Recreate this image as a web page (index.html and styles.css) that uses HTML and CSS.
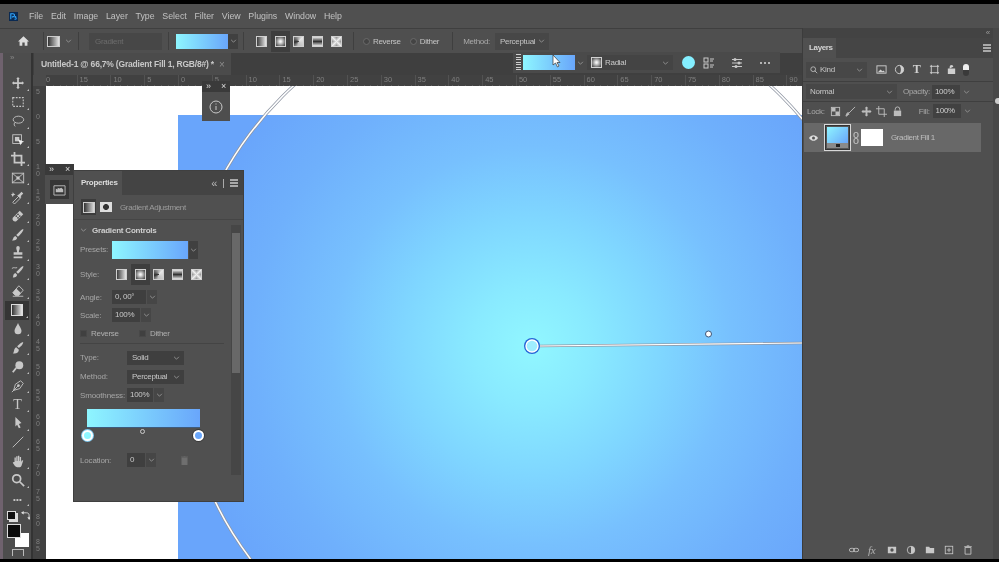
FILE: index.html
```html
<!DOCTYPE html>
<html lang="en">
<head>
<meta charset="utf-8">
<title>Photoshop</title>
<link rel="stylesheet" href="styles.css">
</head>
<body>
<div class="frame">
  <header class="menubar">
    <svg class="pslogo" viewBox="0 0 10 10"><rect width="10" height="10" fill="#0b2a52"/><path d="M2 8V2h2.4a1.6 1.6 0 0 1 0 3.4H3.2" fill="none" stroke="#31a8ff" stroke-width="1.2"/><path d="M8 5H6.6v1.2H8V8H6" fill="none" stroke="#31a8ff"/></svg>
    <nav class="menu"><span>File</span><span>Edit</span><span>Image</span><span>Layer</span><span>Type</span><span>Select</span><span>Filter</span><span>View</span><span>Plugins</span><span>Window</span><span>Help</span></nav>
  </header>
  <div class="main">
    <div class="leftcol">
      <div class="options">
        <svg class="home" viewBox="0 0 14 12"><path d="M7 0 0 6.5h2V12h3.5V8h3v4H12V6.5h2z" fill="#dcdcdc"/></svg>
        <i class="vsep s1"></i>
        <span class="gradtype"></span><svg class="chev ch1" viewBox="0 0 8 5"><path d="M1 1l3 3 3-3" /></svg>
        <i class="vsep s2"></i>
        <span class="disabledsel">Gradient</span>
        <i class="vsep s3"></i>
        <span class="swatch main-swatch"></span><span class="chevbox"><svg class="chev" viewBox="0 0 8 5"><path d="M1 1l3 3 3-3"/></svg></span>
        <i class="vsep s4"></i>
        <div class="styles opt-styles">
          <span class="st"><b class="g-lin"></b></span>
          <span class="st on"><b class="g-rad"></b></span>
          <span class="st"><b class="g-ang"></b></span>
          <span class="st"><b class="g-ref"></b></span>
          <span class="st"><b class="g-dia"></b></span>
        </div>
        <i class="vsep s5"></i>
        <label class="radio r1"><u></u>Reverse</label>
        <label class="radio r2"><u></u>Dither</label>
        <i class="vsep s6"></i>
        <span class="optlabel">Method:</span>
        <span class="optsel">Perceptual<svg class="chev" viewBox="0 0 8 5"><path d="M1 1l3 3 3-3"/></svg></span>
      </div>
      <div class="work">
        <aside class="toolbar">
          <div class="tgrip">»</div>
          <div class="tool"><svg viewBox="0 0 16 16"><path d="M8 1l2 2.500H9V7h3.500V6L15 8l-2.500 2V9H9v3.500h1L8 15l-2-2.500h1V9H3.500v1L1 8l2.500-2v1H7V3.500H6z"/></svg></div>
          <div class="tool"><svg viewBox="0 0 16 16"><rect x="2" y="3" width="12" height="10" class="dash"/></svg></div>
          <div class="tool"><svg viewBox="0 0 16 16"><ellipse cx="8.500" cy="6.500" rx="6" ry="4" class="ln"/><path d="M4 10c-1 2 0 4 1 4" class="ln"/></svg></div>
          <div class="tool"><svg viewBox="0 0 16 16"><rect x="2" y="2" width="10" height="10" class="ln"/><rect x="4.500" y="4.500" width="5" height="5"/><path d="M8 7l7 3-3 1-1 3z" fill="#eee"/></svg></div>
          <div class="tool"><svg viewBox="0 0 16 16"><path d="M4 0v12h12M0 4h12v12" class="ln2"/></svg></div>
          <div class="tool"><svg viewBox="0 0 16 16"><rect x="1.500" y="2.500" width="13" height="11" class="ln"/><path d="M1.500 2.500l13 11m0-11l-13 11" class="ln"/><circle cx="8" cy="8" r="2"/></svg></div>
          <div class="tool"><svg viewBox="0 0 16 16"><path d="M2 14l7-7 2 2-7 7z" class="ln"/><path d="M9 5l3-3 2 2-3 3 1 1-2 1-3-3z"/><path d="M2 2l1 2 2 1-2 1-1 2-1-2-1-1 2-1z"/></svg></div>
          <div class="tool"><svg viewBox="0 0 16 16"><path d="M2 10l8-8 4 4-8 8a3 3 0 0 1-4-4z"/><circle cx="6" cy="8" r="1" fill="#444"/><circle cx="8" cy="6" r="1" fill="#444"/><circle cx="8" cy="10" r="1" fill="#444"/><circle cx="10" cy="8" r="1" fill="#444"/></svg></div>
          <div class="tool"><svg viewBox="0 0 16 16"><path d="M14 1c1 2-4 7-6 9l-2-2c2-2 6-7 8-7zM5 9l2 2c0 2-3 4-6 3 2-1 1-4 4-5z"/></svg></div>
          <div class="tool"><svg viewBox="0 0 16 16"><path d="M6 2a2 2 0 1 1 4 0c0 2-1 3-1 5h4v3H3V7h4c0-2-1-3-1-5zM3 12h10v2H3z"/></svg></div>
          <div class="tool"><svg viewBox="0 0 16 16"><path d="M14 1c1 2-4 7-6 9l-2-2c2-2 6-7 8-7zM5 9l2 2c0 2-3 4-5 3 1-1 0-4 3-5z"/><path d="M1 4c2-2 4 0 6-1" class="ln"/></svg></div>
          <div class="tool"><svg viewBox="0 0 16 16"><path d="M9 2l5 5-5 6H5L2 10z" class="ln"/><path d="M6 5l5 5-2 3H5l-3-3z"/><path d="M2 14h12" class="ln"/></svg></div>
          <div class="tool active"><span class="gradtool"></span></div>
          <div class="tool"><svg viewBox="0 0 16 16"><path d="M8 1c1 3 4 6 4 9a4 4 0 0 1-8 0c0-3 3-6 4-9z"/></svg></div>
          <div class="tool"><svg viewBox="0 0 16 16"><path d="M14 1c0 3-3 5-5 7l-2-2c2-2 5-5 7-5z"/><path d="M6 7l3 3c0 3-3 5-7 4 2-1 1-6 4-7z"/></svg></div>
          <div class="tool"><svg viewBox="0 0 16 16"><circle cx="9.500" cy="6" r="4.500"/><path d="M6 9l-4 5" class="ln2"/></svg></div>
          <div class="tool"><svg viewBox="0 0 16 16"><path d="M3 13l2-7 6-4 3 3-4 6z" class="ln"/><circle cx="8.500" cy="7.500" r="1.500"/><path d="M1 15l7-7" class="ln"/></svg></div>
          <div class="tool"><span class="ttool">T</span></div>
          <div class="tool"><svg viewBox="0 0 16 16"><path d="M5 1l7 7-3 1 2 4-2 1-2-4-2 2z"/></svg></div>
          <div class="tool"><svg viewBox="0 0 16 16"><path d="M2 14L14 2" class="ln"/></svg></div>
          <div class="tool"><svg viewBox="0 0 16 16"><path d="M4 9V4h1.500v4h.5V2.500h1.500V8h.5V2h1.500v6h.5V3.500H11.500V9l1-2 1.500.500-2 6A2 2 0 0 1 10 15H7c-2 0-3-2-5-5l1-1z"/></svg></div>
          <div class="tool"><svg viewBox="0 0 16 16"><circle cx="6.500" cy="6.500" r="4.500" class="ln2"/><path d="M10 10l5 5" class="ln2"/></svg></div>
          <div class="tool"><span class="dots">•••</span></div>
          <div class="minicolors">
            <span class="mini"></span>
            <svg class="swap" viewBox="0 0 10 10"><path d="M1 2h5c2 0 3 1 3 3v3" class="ln"/><path d="M3 0v4L0 2zM7 7h4L9 10z"/></svg>
          </div>
          <div class="colors"><span class="bgc"></span><span class="fgc"></span></div>
          <div class="quick"></div>
        </aside>
        <div class="doc">
          <div class="tabs"><div class="tab"><span>Untitled-1 @ 66,7% (Gradient Fill 1, RGB/8#) *</span><em>×</em></div></div>
          <div class="hrow">
            <span class="corner"></span>
            <div class="hruler"><span class="first">0</span><span>15</span><span>10</span><span>5</span><span>0</span><span>5</span><span>10</span><span>15</span><span>20</span><span>25</span><span>30</span><span>35</span><span>40</span><span>45</span><span>50</span><span>55</span><span>60</span><span>65</span><span>70</span><span>75</span><span>80</span><span>85</span><span>90</span></div>
          </div>
          <div class="docbody">
            <div class="vruler"><span>5</span><span>0</span><span>5</span><span>10</span><span>15</span><span>20</span><span>25</span><span>30</span><span>35</span><span>40</span><span>45</span><span>50</span><span>55</span><span>60</span><span>65</span><span>70</span><span>75</span><span>80</span><span>85</span></div>
            <div class="canvas">
              <div class="fill"></div>
              <svg class="overlay" viewBox="0 0 756 473">
                <circle cx="486" cy="260" r="353" class="ring-o"/>
                <circle cx="486" cy="260" r="353" class="ring-i"/>
                <path d="M493 260L756 257" class="ring-o thin"/>
                <path d="M493 260L756 257" class="ring-i thin"/>
                <circle cx="662.500" cy="248" r="3" class="mid"/>
                <circle cx="486" cy="260" r="8" class="handle-o"/>
                <circle cx="486" cy="260" r="6" class="handle-i"/>
              </svg>
            </div>
          </div>
        </div>
      </div>
    </div>
    <aside class="layers">
      <div class="collapse">«</div>
      <div class="ltabs"><span class="ltab">Layers</span><span class="burger"><i></i><i></i><i></i></span></div>
      <div class="lrow filter">
        <span class="lselect kind"><svg class="mag" viewBox="0 0 10 10"><circle cx="4" cy="4" r="3" class="ln"/><path d="M6 6l3 3" class="ln"/></svg>Kind<svg class="chev" viewBox="0 0 8 5"><path d="M1 1l3 3 3-3"/></svg></span>
        <div class="ficons">
          <svg viewBox="0 0 12 12"><rect x="1" y="2" width="10" height="8" class="ln"/><path d="M2 9l3-3 2 2 1-1 2 2z"/></svg>
          <svg viewBox="0 0 12 12"><circle cx="6" cy="6" r="4.500" class="ln"/><path d="M6 1.500a4.500 4.500 0 0 1 0 9c2-2 2-7 0-9z"/></svg>
          <span class="ft">T</span>
          <svg viewBox="0 0 12 12"><path d="M2.500 1v10m7-10v10M1 2.500h10m-10 7h10" class="ln"/></svg>
          <svg viewBox="0 0 12 12"><path d="M4 5V3a2 2 0 0 1 4 0M2 5h8v6H2z"/></svg>
          <span class="toggle"></span>
        </div>
      </div>
      <div class="lrow blend">
        <span class="lselect normal">Normal<svg class="chev" viewBox="0 0 8 5"><path d="M1 1l3 3 3-3"/></svg></span>
        <span class="lbl op">Opacity:</span><span class="num">100%</span><svg class="chev" viewBox="0 0 8 5"><path d="M1 1l3 3 3-3"/></svg>
      </div>
      <div class="lrow lock">
        <span class="lbl">Lock:</span>
        <div class="licons">
          <svg viewBox="0 0 12 12"><rect x="1.500" y="1.500" width="9" height="9" class="ln"/><path d="M2 2h4v4H2zM6 6h4v4H6z"/></svg>
          <svg viewBox="0 0 12 12"><path d="M11 1L4 8 2 11l-1 0 1-3 2-1" class="ln"/><path d="M1 11l2-4 2 2z"/></svg>
          <svg viewBox="0 0 12 12"><path d="M6 .5l2 2H7V5h2.500V4l2 2-2 2V7H7v2.500h1l-2 2-2-2h1V7H2.500v1l-2-2 2-2v1H5V2.500H4z"/></svg>
          <svg viewBox="0 0 12 12"><path d="M3 0v9h9M0 3h9v9" class="ln"/></svg>
          <svg viewBox="0 0 12 12"><path d="M3.500 5V3.500a2.500 2.500 0 0 1 5 0V5" class="ln"/><path d="M2 5h8v6H2z"/></svg>
        </div>
        <span class="lbl fill-l">Fill:</span><span class="num">100%</span><svg class="chev" viewBox="0 0 8 5"><path d="M1 1l3 3 3-3"/></svg>
      </div>
      <div class="layerrow">
        <svg class="eye" viewBox="0 0 12 8"><path d="M0 4c3-5 9-5 12 0-3 5-9 5-12 0z" fill="#ddd"/><circle cx="6" cy="4" r="2" fill="#555"/></svg>
        <div class="thumb"><div class="thumbgrad"></div><div class="thumbbar"></div></div>
        <svg class="link" viewBox="0 0 6 12"><rect x="1" y=".5" width="4" height="5" rx="1.500" class="ln"/><rect x="1" y="6.500" width="4" height="5" rx="1.500" class="ln"/></svg>
        <div class="mask"></div>
        <span class="lname">Gradient Fill 1</span>
      </div>
      <div class="lspacer"></div>
      <div class="lfooter">
        <svg viewBox="0 0 12 12"><rect x="0.500" y="4" width="6" height="4" rx="2" class="ln dim"/><rect x="5.500" y="4" width="6" height="4" rx="2" class="ln dim"/></svg>
        <span class="fx">fx</span>
        <svg viewBox="0 0 12 12"><path fill-rule="evenodd" d="M1 2h10v8H1zM6 4a2 2 0 1 0 0 4 2 2 0 0 0 0-4z"/></svg>
        <svg viewBox="0 0 12 12"><circle cx="6" cy="6" r="4.500" class="ln"/><path d="M6 1.500a4.500 4.500 0 0 1 0 9z" /></svg>
        <svg viewBox="0 0 12 12"><path d="M1 2h4l1 1.500h5V10H1z"/></svg>
        <svg viewBox="0 0 12 12"><rect x="1.500" y="1.500" width="9" height="9" class="ln"/><path d="M6 3.500v5M3.500 6h5" class="ln"/></svg>
        <svg viewBox="0 0 12 12"><path d="M2.500 3h7v8h-7zM1.500 2h9M4.500 1h3" class="ln dim"/></svg>
      </div>
    </aside>
    <div class="rstrip"><i></i></div>
  </div>

  <div class="dock info-dock">
    <div class="dockhead"><span>»</span><span>×</span></div>
    <div class="dockbody"><svg viewBox="0 0 14 14" class="infoic"><circle cx="7" cy="7" r="6" class="ln"/><path d="M7 6v4M7 3.500v1" class="ln"/></svg></div>
  </div>
  <div class="dock lib-dock">
    <div class="dockhead"><span>»</span><span>×</span></div>
    <div class="dockbody"><span class="libbtn"><svg viewBox="0 0 14 14"><path d="M1 3h12v10H1z" class="ln"/><path d="M3 10V6l2 1V5l2 1 2-1 2 2v3z"/></svg></span></div>
  </div>

  <div class="ctxbar">
    <span class="grip"></span>
    <span class="swatch ctx-swatch"></span>
    <svg class="chev" viewBox="0 0 8 5"><path d="M1 1l3 3 3-3"/></svg>
    <span class="radialsel"><b class="g-rad"></b>Radial<svg class="chev" viewBox="0 0 8 5"><path d="M1 1l3 3 3-3"/></svg></span>
    <span class="dotc"></span>
    <svg class="ctxic" viewBox="0 0 12 12"><rect x="1" y="1" width="4" height="4" class="ln"/><rect x="1" y="7" width="4" height="4" class="ln"/><path d="M7 2h4M7 4h3M7 8h4M7 10h3" class="ln"/></svg>
    <svg class="ctxic c2" viewBox="0 0 12 12"><path d="M1 2.500h10M1 6h10M1 9.500h10" class="ln"/><circle cx="4" cy="2.500" r="1.500"/><circle cx="8" cy="6" r="1.500"/><circle cx="5" cy="9.500" r="1.500"/></svg>
    <span class="more"><i></i><i></i><i></i></span>
  </div>
  <svg class="cursor" viewBox="0 0 10 14"><path d="M1 1v10l2.500-2 2 4 1.500-1-2-3.500h3z" fill="#fff" stroke="#333" stroke-width=".7"/></svg>

  <section class="props">
    <div class="phead">
      <span class="ptab">Properties</span>
      <div class="pctl"><span class="pcol">«</span><i class="pbar"></i><span class="burger"><i></i><i></i><i></i></span></div>
    </div>
    <div class="psub">
      <span class="subic on"><b class="g-lin2"></b></span>
      <span class="subic"><b class="maskic"></b></span>
      <span class="subtitle">Gradient Adjustment</span>
    </div>
    <div class="pbody">
      <div class="pcontent">
        <div class="section"><svg class="chev" viewBox="0 0 8 5"><path d="M1 1l3 3 3-3"/></svg>Gradient Controls</div>
        <div class="row presets"><span class="plbl w32">Presets:</span><span class="swatch pre-swatch"></span><span class="chevbox tall"><svg class="chev" viewBox="0 0 8 5"><path d="M1 1l3 3 3-3"/></svg></span></div>
        <div class="row stylerow"><span class="plbl w32">Style:</span>
          <div class="styles p-styles">
            <span class="st"><b class="g-lin"></b></span>
            <span class="st on"><b class="g-rad"></b></span>
            <span class="st"><b class="g-ang"></b></span>
            <span class="st"><b class="g-ref"></b></span>
            <span class="st"><b class="g-dia"></b></span>
          </div>
        </div>
        <div class="row small"><span class="plbl w32">Angle:</span><span class="field w34">0, 00°</span><span class="chevbox sm"><svg class="chev" viewBox="0 0 8 5"><path d="M1 1l3 3 3-3"/></svg></span></div>
        <div class="row small"><span class="plbl w32">Scale:</span><span class="field w28">100%</span><span class="chevbox sm"><svg class="chev" viewBox="0 0 8 5"><path d="M1 1l3 3 3-3"/></svg></span></div>
        <div class="row checks"><label class="check c1"><u></u>Reverse</label><label class="check"><u></u>Dither</label></div>
        <hr class="div">
        <div class="row sel"><span class="plbl w47">Type:</span><span class="field select">Solid<svg class="chev" viewBox="0 0 8 5"><path d="M1 1l3 3 3-3"/></svg></span></div>
        <div class="row sel"><span class="plbl w47">Method:</span><span class="field select">Perceptual<svg class="chev" viewBox="0 0 8 5"><path d="M1 1l3 3 3-3"/></svg></span></div>
        <div class="row small"><span class="plbl w47">Smoothness:</span><span class="field w26">100%</span><span class="chevbox sm"><svg class="chev" viewBox="0 0 8 5"><path d="M1 1l3 3 3-3"/></svg></span></div>
        <div class="editor">
          <div class="ebar"></div>
          <span class="stop s-a"></span><span class="stop s-b"></span><span class="midp"></span>
        </div>
        <div class="row small loc"><span class="plbl w47">Location:</span><span class="field w18">0</span><span class="chevbox sm"><svg class="chev" viewBox="0 0 8 5"><path d="M1 1l3 3 3-3"/></svg></span>
          <svg class="trash" viewBox="0 0 8 10"><path d="M1 2h6v8H1zM0 1h8M3 0h2" fill="#6f6f6f" stroke="#6f6f6f" stroke-width=".8"/></svg>
        </div>
      </div>
      <div class="pscroll"><span class="thumbv"></span></div>
    </div>
  </section>
</div>
</body>
</html>
```
FILE: styles.css
```css
* { box-sizing: border-box; }
html, body { margin: 0; height: 100%; background: #000; overflow: hidden; }
body { font-family: "Liberation Sans", Arial, sans-serif; font-size: 8px; letter-spacing: -.3px; color: #c4c4c4; }
svg { fill: currentColor; display: block; }
svg .ln, .ln { fill: none; stroke: currentColor; stroke-width: 1; }
svg .ln2, .ln2 { fill: none; stroke: currentColor; stroke-width: 2; }
svg .dash, .dash { fill: none; stroke: currentColor; stroke-width: 1.2; stroke-dasharray: 2 1.5; }
.dim { stroke: #777; }
u { text-decoration: none; }
i, em, b { font-style: normal; }

.frame { position: relative; width: 999px; height: 562px; padding: 4px 0 3px; display: flex; flex-direction: column; background: #000; overflow: hidden; filter: blur(.55px); }

/* Menu */
.menubar { height: 25px; flex: none; display: flex; align-items: center; padding-left: 9px; background: #505050; border-bottom: 1px solid #3f3f3f; }
.pslogo { width: 9px; height: 9px; }
.menu { display: flex; gap: 7.700px; margin-left: 11px; font-size: 8.800px; letter-spacing: 0; color: #c2c2c2; }
.main { flex: 1; display: flex; min-height: 0; }
.leftcol { width: 802px; flex: none; display: flex; flex-direction: column; min-height: 0; }

/* Options */
.options { height: 24px; flex: none; display: flex; align-items: center; background: #4f4f4f; padding-left: 18px; }
.home { width: 11px; height: 10px; }
.vsep { width: 1px; height: 18px; background: #3f3f3f; flex: none; }
.s1 { margin-left: 14px; }
.gradtype { width: 13px; height: 11px; margin-left: 3px; background: linear-gradient(90deg, #333, #e4e4e4); border: 1px solid #ccc; }
.chev { width: 7px; height: 4px; flex: none; fill: none; stroke: #a0a0a0; stroke-width: 1; }
.ch1 { margin-left: 5px; }
.s2 { margin-left: 6px; }
.disabledsel { width: 73px; height: 17px; margin-left: 10px; padding-left: 6px; line-height: 17px; background: #474747; color: #6c6c6c; }
.s3 { margin-left: 6px; }
.swatch { background: linear-gradient(90deg, #8ef6ff, #69a6fb); display: block; flex: none; }
.main-swatch { width: 52px; height: 15px; margin-left: 7px; }
.chevbox { display: flex; align-items: center; justify-content: center; width: 10px; height: 15px; background: #404040; flex: none; }
.s4 { margin-left: 5px; }
.styles { display: flex; align-items: center; }
.st { display: flex; align-items: center; justify-content: center; width: 18.800px; height: 21px; flex: none; }
.st.on { background: #3e3e3e; }
.st b { display: block; width: 11px; height: 11px; }
.opt-styles { margin-left: 8px; }
.g-lin { background: linear-gradient(90deg, #3d3d3d, #e8e8e8); border: 1px solid #d0d0d0; }
.g-rad { background: radial-gradient(circle, #f3f3f3 10%, #555 85%); border: 1px solid #d0d0d0; }
.g-ang { background: conic-gradient(from 45deg, #e6e6e6, #bbb 40%, #2d2d2d 60%, #e6e6e6); border: 1px solid #d0d0d0; }
.g-ref { background: linear-gradient(180deg, #e8e8e8, #333 50%, #e8e8e8); border: 1px solid #d0d0d0; }
.g-dia { background: linear-gradient(45deg, #333, #eee 50%, #333), linear-gradient(-45deg, #333, #eee 50%, #333); background-blend-mode: lighten; border: 1px solid #d0d0d0; }
.s5 { margin-left: 7px; }
.radio { display: flex; align-items: center; gap: 3px; }
.radio u { width: 7px; height: 7px; flex: none; border: 1px solid #6a6a6a; border-radius: 50%; background: #444; }
.r1 { margin-left: 9px; }
.r2 { margin-left: 9px; }
.s6 { margin-left: 13px; }
.optlabel { margin-left: 10px; color: #aaa; }
.optsel { display: flex; align-items: center; justify-content: space-between; width: 54px; height: 17px; margin-left: 5px; padding: 0 4px 0 5px; background: #474747; }

/* Work */
.work { flex: 1; display: flex; min-height: 0; }
.toolbar { width: 33px; flex: none; display: flex; flex-direction: column; align-items: center; padding-left: 2px; background: linear-gradient(90deg, #6f626e 0, #6f626e 3px, #4d4d4d 3px, #4d4d4d 31px, #333 31px); }
.tgrip { height: 21px; width: 100%; padding: 0 0 0 8px; line-height: 9px; color: #888; }
.tool { position: relative; width: 24px; height: 18.900px; flex: none; display: flex; align-items: center; justify-content: center; color: #c8c8c8; }
.tool svg { width: 14px; height: 14px; }
.tool::after { content: ""; position: absolute; right: 1px; bottom: 2px; border: 1.500px solid transparent; border-right-color: #c0c0c0; border-bottom-color: #c0c0c0; }
.tool.active { background: #353535; margin-left: -1px; }
.gradtool { width: 12px; height: 12px; background: linear-gradient(90deg, #333, #e6e6e6); border: 1px solid #ddd; }
.ttool { font-family: "Liberation Serif", serif; font-size: 14px; line-height: 16px; }
.dots { font-size: 8px; letter-spacing: .2px; }
.minicolors { height: 14px; width: 24px; display: flex; justify-content: space-between; align-items: center; color: #ddd; }
.mini { width: 9px; height: 9px; margin-left: 1px; background: #111; border: 1px solid #ddd; box-shadow: 2px 2px 0 #ddd; }
.swap { width: 9px; height: 9px; }
.colors { position: relative; width: 22px; height: 23px; flex: none; margin-top: 2px; }
.bgc { position: absolute; right: 0; bottom: 0; width: 14px; height: 14px; background: #fff; }
.fgc { position: absolute; left: 0; top: 0; width: 14px; height: 14px; background: #0c0c0c; border: 1px solid #ddd; }
.quick { width: 12px; height: 7px; margin-top: 2px; border: 1px solid #bbb; border-bottom: 0; }

.doc { flex: 1; display: flex; flex-direction: column; min-width: 0; }
.tabs { height: 22px; flex: none; background: #3f3f3f; padding-left: 1px; }
.tab { display: flex; align-items: center; width: 197px; height: 22px; padding: 0 6px 0 7px; background: #4b4b4b; font-size: 8.500px; letter-spacing: -.2px; font-weight: 700; color: #c8c8c8; white-space: nowrap; }
.tab em { margin-left: 5px; font-weight: 400; color: #8c8c8c; font-size: 10px; }
.hrow { height: 11px; flex: none; display: flex; }
.corner { width: 13px; flex: none; background: #4b4b4b; }
.hruler { flex: 1; display: flex; overflow: hidden; background-color: #414141; background-image: repeating-linear-gradient(90deg, #5e5e5e 0 1px, transparent 1px 6.760px); background-size: 100% 1px; background-repeat: no-repeat; background-position: bottom; font-size: 7.500px; letter-spacing: 0; color: #7f7f7f; }
.hruler span { width: 33.800px; flex: none; padding-left: 2px; line-height: 10px; border-left: 1px solid #525252; }
.hruler .first { width: 30.600px; border: 0; padding: 0; }
.docbody { flex: 1; display: flex; min-height: 0; }
.vruler { width: 13px; flex: none; display: flex; flex-direction: column; overflow: hidden; background: #414141; font-size: 7px; letter-spacing: 0; color: #7f7f7f; }
.vruler span { height: 25px; flex: none; width: 7px; margin-left: 3px; padding-top: 2px; line-height: 7px; word-break: break-all; }
.canvas { position: relative; flex: 1; padding: 29px 0 0 132px; display: flex; background: #fff; min-width: 0; overflow: hidden; }
.fill { flex: 1; background: radial-gradient(circle 360px at 354px 231px, #91f7ff 0, #89eaff 60px, #7fd6ff 130px, #77c0fe 200px, #6fb0fc 280px, #69a5fb 355px); }
.overlay { position: absolute; left: 0; top: 0; width: 756px; height: 473px; fill: none; }
.ring-o { fill: none; stroke: #8f96a3; stroke-width: 3; }
.ring-i { fill: none; stroke: #fff; stroke-width: 1.500; }
.thin { stroke-width: 2.500; }
.ring-i.thin { stroke-width: 1.200; }
.mid { fill: #fff; stroke: #3d5578; stroke-width: 1; }
.handle-o { fill: #2463d6; }
.handle-i { fill: #9feeff; stroke: #fff; stroke-width: 1.400; }

/* Layers */
.layers { width: 191px; flex: none; margin-top: -1px; display: flex; flex-direction: column; background: #4f4f4f; border-left: 1px solid #3c3c3c; position: relative; z-index: 1; }
.collapse { height: 10px; text-align: right; padding-right: 3px; line-height: 9px; color: #999; background: #434343; }
.ltabs { height: 20px; flex: none; display: flex; align-items: center; justify-content: space-between; background: #454545; padding-right: 2px; }
.ltab { display: block; width: 33px; height: 20px; line-height: 19px; padding-left: 6px; background: #505050; font-weight: 700; color: #d4d4d4; letter-spacing: -.35px; }
.burger { display: flex; flex-direction: column; gap: 1.500px; width: 8px; }
.burger i { display: block; height: 1.500px; background: #a9a9a9; }
.lrow { display: flex; align-items: center; padding-left: 3px; border-bottom: 1px solid #3f3f3f; }
.filter { height: 24px; color: #d0d0d0; }
.lselect { display: flex; align-items: center; height: 16px; padding: 0 4px; background: #474747; color: #c6c6c6; }
.kind { width: 61px; }
.mag { width: 8px; height: 8px; margin-right: 2px; }
.lselect .chev { margin-left: auto; }
.ficons { display: flex; align-items: center; gap: 6.500px; margin-left: 9px; }
.ficons svg { width: 11px; height: 11px; }
.ft { font-family: "Liberation Serif", serif; font-weight: 700; font-size: 12px; width: 11px; text-align: center; }
.toggle { width: 6px; height: 12px; margin-left: -1px; border-radius: 3px; background: linear-gradient(#eee 0 6px, #3a3a3a 6px); }
.blend { height: 20px; }
.normal { width: 91px; height: 15px; }
.lbl { color: #a8a8a8; }
.op { margin-left: 6px; }
.num { display: block; width: 28px; height: 14px; line-height: 14px; margin: 0 3px 0 2px; padding-left: 3px; background: #414141; color: #cfcfcf; }
.lock { height: 21px; padding: 0 0 3px 4px; border: 0; }
.licons { display: flex; gap: 4.500px; margin-left: 5px; color: #bdbdbd; }
.licons svg { width: 11px; height: 11px; }
.fill-l { margin-left: 16px; }
.lock .num { margin-left: 3px; }
.layerrow { display: flex; align-items: center; width: 177px; height: 29px; flex: none; margin-left: 1px; background: #686868; color: #c8c8c8; }
.eye { width: 9px; height: 6px; margin-left: 5px; }
.thumb { width: 27px; height: 27px; margin-left: 6px; border: 1px solid #d8d8d8; outline: 1px solid #333; outline-offset: -2px; display: flex; flex-direction: column; padding: 2px; background: #555; }
.thumbgrad { flex: 1; background: linear-gradient(135deg, #8ef4ff, #69a6fb); }
.thumbbar { height: 5px; background: #8a8a8a; display: flex; justify-content: center; align-items: center; }
.thumbbar::after { content: ""; width: 4px; height: 3px; background: #222; }
.link { width: 6px; height: 12px; margin-left: 2px; }
.mask { width: 22px; height: 17px; margin-left: 2px; background: #fff; }
.lname { margin-left: 8px; letter-spacing: -.4px; color: #bfbfbf; }
.lspacer { flex: 1; }
.lfooter { height: 19px; flex: none; display: flex; align-items: center; justify-content: flex-end; gap: 9px; padding-right: 20px; background: #505050; color: #c8c8c8; }
.lfooter svg { width: 10px; height: 10px; }
.fx { width: 10px; font-family: "Liberation Serif", serif; font-style: italic; font-size: 11px; color: #b0b0b0; }
.rstrip { flex: 1; margin-top: -1px; background: #484848; position: relative; }
.rstrip i { position: absolute; left: 2px; top: 70px; width: 6px; height: 6px; border-radius: 50%; background: #ccc; }

/* Docks */
.dock { position: absolute; z-index: 2; display: flex; flex-direction: column; background: #4e4e4e; }
.dockhead { height: 11px; display: flex; justify-content: space-between; padding: 0 4px; line-height: 10px; font-size: 9px; background: #3a3a3a; color: #ddd; }
.dockbody { flex: 1; display: flex; align-items: center; justify-content: center; }
.info-dock { left: 202px; top: 81px; width: 28px; height: 40px; }
.infoic { width: 14px; height: 14px; color: #c9c9c9; }
.lib-dock { left: 45px; top: 164px; width: 29px; height: 40px; }
.libbtn { display: flex; align-items: center; justify-content: center; width: 19px; height: 19px; background: #363636; color: #bcbcbc; }
.libbtn svg { width: 13px; height: 13px; }

/* Context bar */
.ctxbar { position: absolute; z-index: 3; left: 513px; top: 52px; width: 267px; height: 21px; display: flex; align-items: center; padding-left: 3px; background: #4a4a4a; }
.grip { width: 5px; height: 17px; background: repeating-linear-gradient(#cfcfcf 0 1px, transparent 1px 2.500px); }
.ctx-swatch { width: 52px; height: 15px; margin-left: 2px; }
.ctxbar > .chev { margin-left: 2px; }
.radialsel { display: flex; align-items: center; width: 86px; height: 15px; margin-left: 3px; padding: 0 4px; background: #444; color: #c9c9c9; }
.radialsel b { width: 11px; height: 11px; margin-right: 3px; }
.radialsel .chev { margin-left: auto; }
.dotc { width: 13px; height: 13px; margin-left: 9px; border-radius: 50%; background: #84efff; }
.ctxic { width: 12px; height: 12px; margin-left: 8px; color: #c9c9c9; }
.c2 { margin-left: 16px; }
.more { display: flex; gap: 2px; margin-left: 17px; }
.more i { width: 2px; height: 2px; border-radius: 50%; background: #d8d8d8; }
.cursor { position: absolute; z-index: 4; left: 552px; top: 54px; width: 10px; height: 14px; }

/* Properties */
.props { position: absolute; z-index: 2; left: 74px; top: 171px; width: 169px; height: 330px; display: flex; flex-direction: column; background: #505050; box-shadow: 0 0 0 1px #3f3f3f; }
.phead { height: 24px; flex: none; display: flex; justify-content: space-between; align-items: center; background: #444; }
.ptab { display: block; width: 48px; height: 24px; line-height: 23px; padding-left: 7px; background: #505050; font-weight: 700; color: #ddd; }
.pctl { display: flex; align-items: center; gap: 6px; padding-right: 5px; color: #bbb; font-size: 11px; }
.pbar { width: 1px; height: 9px; background: #aaa; }
.psub { height: 25px; flex: none; display: flex; align-items: center; padding-left: 7px; gap: 2px; border-bottom: 1px solid #454545; }
.subic { display: flex; align-items: center; justify-content: center; width: 15px; height: 16px; }
.subic.on { background: #3b3b3b; }
.g-lin2 { width: 12px; height: 11px; background: linear-gradient(90deg, #333, #ddd); border: 1px solid #ccc; }
.maskic { width: 12px; height: 10px; background: radial-gradient(circle, #333 35%, #ddd 40%); }
.subtitle { margin-left: 5px; color: #9c9c9c; letter-spacing: -.35px; }
.pbody { flex: 1; display: flex; min-height: 0; padding-left: 6px; }
.pcontent { width: 151px; flex: none; }
.section { display: flex; align-items: center; gap: 5px; height: 20px; font-weight: 700; letter-spacing: -.2px; color: #cfcfcf; }
.row { display: flex; align-items: center; }
.plbl { flex: none; color: #a6a6a6; letter-spacing: -.15px; }
.w32 { width: 32px; }
.w47 { width: 47px; }
.presets { height: 19px; }
.pre-swatch { width: 76px; height: 18px; }
.tall { width: 9px; height: 18px; margin-left: 1px; }
.stylerow { height: 23px; margin-top: 4px; }
.p-styles { margin-left: 0; }
.small { height: 18px; }
.stylerow + .small { margin-top: 2px; }
.field { display: block; height: 14px; line-height: 14px; padding-left: 3px; background: #3f3f3f; color: #c8c8c8; }
.w34 { width: 34px; }
.w28 { width: 28px; }
.w26 { width: 26px; }
.w18 { width: 18px; }
.chevbox.sm { width: 10px; height: 14px; margin-left: 1px; background: #464646; }
.checks { height: 18px; }
.check { display: flex; align-items: center; gap: 4px; color: #b0b0b0; }
.check u { width: 7px; height: 7px; background: #404040; border: 1px solid #484848; }
.c1 { width: 59px; }
.div { margin: 1px 0 0; border: 0; border-top: 1px solid #444; width: 144px; }
.sel { height: 19px; }
.div + .sel { margin-top: 4px; }
.select { display: flex; align-items: center; justify-content: space-between; width: 57px; height: 14px; padding: 0 4px 0 5px; }
.editor { position: relative; width: 126px; height: 42px; margin-top: 5px; }
.ebar { position: absolute; left: 7px; top: 0; width: 113px; height: 19px; background: linear-gradient(90deg, #8ef6ff, #69a6fb); border-bottom: 1px solid #3e5a7c; }
.stop { position: absolute; top: 21px; width: 11px; height: 11px; border-radius: 50%; border: 2px solid #fff; }
.s-a { left: 2px; background: #8ef6ff; box-shadow: 0 0 0 1px #7ec7ee; }
.s-b { left: 113px; background: #69a6fb; box-shadow: 0 0 0 1px #3a3a3a; }
.midp { position: absolute; left: 60px; top: 20px; width: 5px; height: 5px; border: 1px solid #ccc; border-radius: 50%; }
.loc { height: 18px; }
.trash { width: 7px; height: 9px; margin-left: 25px; }
.pscroll { position: relative; width: 10px; height: 250px; margin: 5px 0 0 0; background: #464646; }
.thumbv { position: absolute; top: 8px; left: 1px; width: 8px; height: 140px; background: #686868; }
```
